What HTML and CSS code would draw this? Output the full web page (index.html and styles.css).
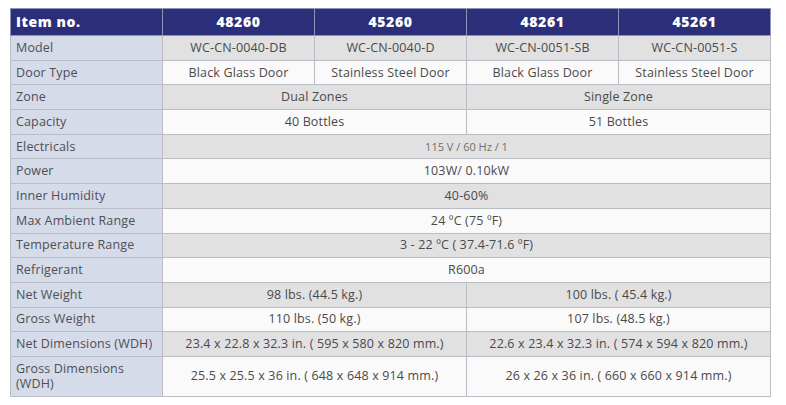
FILE: index.html
```html
<!DOCTYPE html>
<html>
<head>
<meta charset="utf-8">
<link rel="stylesheet" href="styles.css">
</head>
<body>
<table class="spec">
  <colgroup>
    <col class="c-label"><col class="c-val"><col class="c-val"><col class="c-val"><col class="c-val">
  </colgroup>
  <thead>
    <tr class="head">
      <th class="lbl">Item no.</th><th>48260</th><th>45260</th><th>48261</th><th>45261</th>
    </tr>
  </thead>
  <tbody>
    <tr class="g"><td class="lbl">Model</td><td>WC-CN-0040-DB</td><td>WC-CN-0040-D</td><td>WC-CN-0051-SB</td><td>WC-CN-0051-S</td></tr>
    <tr class="w"><td class="lbl">Door Type</td><td>Black Glass Door</td><td>Stainless Steel Door</td><td>Black Glass Door</td><td>Stainless Steel Door</td></tr>
    <tr class="g"><td class="lbl">Zone</td><td colspan="2">Dual Zones</td><td colspan="2">Single Zone</td></tr>
    <tr class="w"><td class="lbl">Capacity</td><td colspan="2">40 Bottles</td><td colspan="2">51 Bottles</td></tr>
    <tr class="g"><td class="lbl">Electricals</td><td colspan="4" class="small">115 V / 60 Hz / 1</td></tr>
    <tr class="w"><td class="lbl">Power</td><td colspan="4">103W/ 0.10kW</td></tr>
    <tr class="g"><td class="lbl">Inner Humidity</td><td colspan="4">40-60%</td></tr>
    <tr class="w"><td class="lbl">Max Ambient Range</td><td colspan="4">24 ºC (75 ºF)</td></tr>
    <tr class="g"><td class="lbl">Temperature Range</td><td colspan="4">3 - 22 ºC ( 37.4-71.6 ºF)</td></tr>
    <tr class="w"><td class="lbl">Refrigerant</td><td colspan="4">R600a</td></tr>
    <tr class="g"><td class="lbl">Net Weight</td><td colspan="2">98 lbs. (44.5 kg.)</td><td colspan="2">100 lbs. ( 45.4 kg.)</td></tr>
    <tr class="w"><td class="lbl">Gross Weight</td><td colspan="2">110 lbs. (50 kg.)</td><td colspan="2">107 lbs. (48.5 kg.)</td></tr>
    <tr class="g"><td class="lbl">Net Dimensions (WDH)</td><td colspan="2">23.4 x 22.8 x 32.3 in. ( 595 x 580 x 820 mm.)</td><td colspan="2">22.6 x 23.4 x 32.3 in. ( 574 x 594 x 820 mm.)</td></tr>
    <tr class="w tall"><td class="lbl">Gross Dimensions (WDH)</td><td colspan="2">25.5 x 25.5 x 36 in. ( 648 x 648 x 914 mm.)</td><td colspan="2">26 x 26 x 36 in. ( 660 x 660 x 914 mm.)</td></tr>
  </tbody>
</table>
</body>
</html>
```
FILE: styles.css
```css
html, body {
  margin: 0;
  padding: 0;
  background: #ffffff;
}
body {
  padding: 8px 0 0 10px;
  font-family: "Open Sans", "Liberation Sans", sans-serif;
}
.spec {
  border-collapse: collapse;
  table-layout: fixed;
  width: 761px;
  font-size: 12.5px;
  letter-spacing: 0.15px;
  color: #4a4a4a;
}
.c-label { width: 152px; }
.c-val { width: 152px; }
.spec th, .spec td {
  border: 1px solid #b9bcc4;
  height: 23.7px;
  padding: 0 6px;
  text-align: center;
  vertical-align: middle;
  line-height: 14px;
  white-space: nowrap;
}
.spec .head th {
  background: #2b2f7a;
  color: #ffffff;
  font-weight: 800;
  font-size: 14px;
  letter-spacing: 0.6px;
  height: 26px;
  border-color: #8f93b8;
}
.spec .head th.lbl {
  text-align: left;
  padding-left: 5px;
}
.spec td.lbl {
  background: #d5dbe8;
  text-align: left;
  padding-left: 5px;
  color: #4f4f55;
}
.spec tr.g td { background: #e1e1e2; }
.spec tr.w td { background: #fafafa; }
.spec tr td.lbl { background: #d5dbe8; }
.spec tr.tall td { height: 39px; }
.spec tr.tall td.lbl { white-space: normal; line-height: 15px; }
.spec td.small { font-size: 11px; letter-spacing: 0; color: #707070; }
```
